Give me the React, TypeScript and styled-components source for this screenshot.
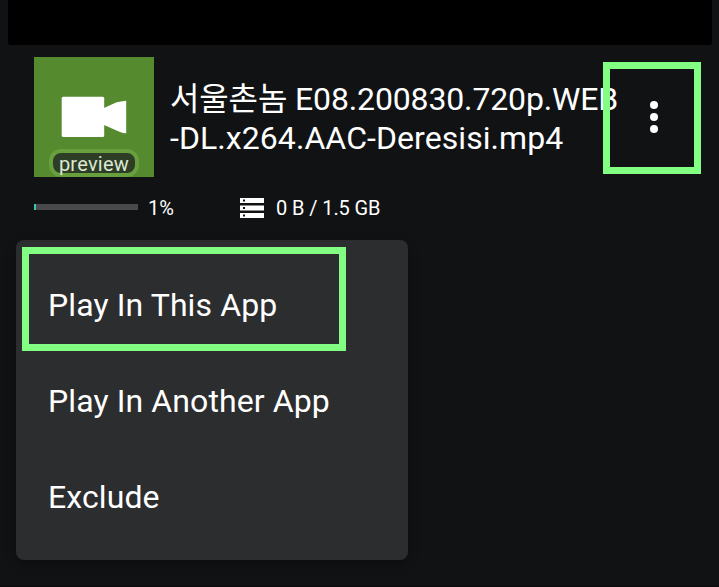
import React from 'react';
import styled, { createGlobalStyle } from 'styled-components';

const GlobalStyle = createGlobalStyle`
  * { box-sizing: border-box; }
  body {
    margin: 0;
    background: #111214;
    color: #fff;
    font-family: Roboto, "Noto Sans CJK KR", sans-serif;
  }
`;

const Screen = styled.main`
  width: 719px;
  height: 587px;
  overflow: hidden;
  display: flex;
  flex-direction: column;
  background: #111214;
  border-bottom: 1px solid #0a0a0c;
`;

const PlayerArea = styled.div`
  flex: none;
  height: 45px;
  margin: 0 7px 0 8px;
  background: #000;
  border-radius: 0 0 3px 3px;
`;

const FileRow = styled.section`
  flex: none;
  display: flex;
  height: 120px;
  margin: 12px 0 0 34px;
`;

const Thumbnail = styled.div`
  position: relative;
  flex: none;
  width: 120px;
  height: 120px;
  background: #568a2f;
  overflow: hidden;

  svg { display: block; }
`;

const PreviewBadge = styled.span`
  position: absolute;
  left: 15px;
  top: 92px;
  width: 90px;
  height: 28px;
  border: 4px solid #68a03e;
  border-radius: 12px;
  background: #2e3d25;
  color: #dce8d3;
  font-size: 20px;
  line-height: 22px;
  text-align: center;
  letter-spacing: 0.25px;
`;

const Title = styled.h1`
  flex: none;
  width: 449px;
  margin: 23px 0 0 16px;
  font-size: 32px;
  font-weight: 400;
  line-height: 39px;
  white-space: nowrap;
`;

const TitleLine = styled.span<{ $spacing: number }>`
  display: block;
  height: 39px;
  letter-spacing: ${({ $spacing }) => $spacing}px;
`;

const MoreButton = styled.button`
  position: relative;
  flex: none;
  width: 70px;
  height: 120px;
  padding: 0;
  border: 0;
  background: none;
  display: flex;
  justify-content: center;
  align-items: center;

  svg { display: block; }
`;

const Highlight = styled.span<{ $x: number; $y: number; $w: number; $h: number }>`
  position: absolute;
  left: ${({ $x }) => $x}px;
  top: ${({ $y }) => $y}px;
  width: ${({ $w }) => $w}px;
  height: ${({ $h }) => $h}px;
  border: 7px solid #82fe82;
  pointer-events: none;
`;

const StatusRow = styled.div`
  flex: none;
  display: flex;
  align-items: center;
  height: 24px;
  margin: 19px 0 0 34px;
  font-size: 20px;
  line-height: 24px;
`;

const Progress = styled.div`
  width: 104px;
  height: 6px;
  margin-bottom: 2px;
  background: #48494a;
`;

const ProgressFill = styled.div`
  width: 2px;
  height: 6px;
  background: #39c5b0;
`;

const Percent = styled.span`
  width: 92px;
  margin-left: 10px;
`;

const FileSize = styled.span`
  letter-spacing: -0.1px;
`;

const StorageIcon = styled.svg`
  width: 24px;
  height: 20px;
  margin-right: 12px;
  margin-bottom: 1px;
`;

const Menu = styled.ul`
  position: relative;
  flex: none;
  width: 392px;
  height: 320px;
  margin: 20px 0 0 16px;
  padding: 16px 0;
  list-style: none;
  border-radius: 8px;
  background: #2c2d2f;
  box-shadow: 0 4px 12px rgba(0, 0, 0, 0.25);
`;

const MenuItem = styled.li`
  height: 96px;
  padding: 1px 32px 0;
  font-size: 32px;
  line-height: 96px;
  letter-spacing: 0.1px;
  white-space: nowrap;
`;

export default function App() {
  return (
    <>
      <GlobalStyle />
      <Screen>
        <PlayerArea />
        <FileRow>
          <Thumbnail>
            <svg width="120" height="120" viewBox="0 0 120 120" fill="#fff" aria-hidden="true">
              <rect x="27.7" y="39.8" width="42.5" height="40.2" rx="1.5" />
              <path d="M70 51 82 45.5Q90 43.7 92.2 43.7V76.3Q89 76.3 86 75L70 68Z" />
            </svg>
            <PreviewBadge>preview</PreviewBadge>
          </Thumbnail>
          <Title>
            <TitleLine $spacing={-0.14}>서울촌놈 E08.200830.720p.WEB</TitleLine>
            <TitleLine $spacing={0.07}>-DL.x264.AAC-Deresisi.mp4</TitleLine>
          </Title>
          <MoreButton aria-label="More options">
            <svg width="8" height="32" viewBox="0 0 8 32" fill="#fff">
              <circle cx="4" cy="4" r="4" />
              <circle cx="4" cy="16" r="4" />
              <circle cx="4" cy="28" r="4" />
            </svg>
            <Highlight $x={-16} $y={5} $w={98} $h={112} />
          </MoreButton>
        </FileRow>
        <StatusRow>
          <Progress><ProgressFill /></Progress>
          <Percent>1%</Percent>
          <StorageIcon viewBox="0 0 24 20" aria-hidden="true">
            <path fill="#fff" d="M0 0h24v5H0zM0 7.5h24v5H0zM0 15h24v5H0z" />
            <path fill="#111214" d="M3 1.5h2v2H3zM3 9h2v2H3zM3 16.5h2v2H3z" />
          </StorageIcon>
          <FileSize>0 B / 1.5 GB</FileSize>
        </StatusRow>
        <Menu>
          <MenuItem>Play In This App</MenuItem>
          <MenuItem>Play In Another App</MenuItem>
          <MenuItem>Exclude</MenuItem>
          <Highlight $x={6} $y={7} $w={324} $h={104} />
        </Menu>
      </Screen>
    </>
  );
}
